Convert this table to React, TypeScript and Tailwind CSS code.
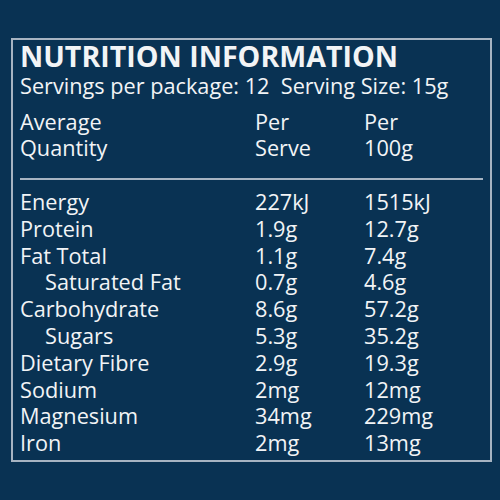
const rows: { name: string; serve: string; per100: string; sub?: boolean }[] = [
  { name: 'Energy', serve: '227kJ', per100: '1515kJ' },
  { name: 'Protein', serve: '1.9g', per100: '12.7g' },
  { name: 'Fat Total', serve: '1.1g', per100: '7.4g' },
  { name: 'Saturated Fat', serve: '0.7g', per100: '4.6g', sub: true },
  { name: 'Carbohydrate', serve: '8.6g', per100: '57.2g' },
  { name: 'Sugars', serve: '5.3g', per100: '35.2g', sub: true },
  { name: 'Dietary Fibre', serve: '2.9g', per100: '19.3g' },
  { name: 'Sodium', serve: '2mg', per100: '12mg' },
  { name: 'Magnesium', serve: '34mg', per100: '229mg' },
  { name: 'Iron', serve: '2mg', per100: '13mg' },
];

export default function App() {
  return (
    <div
      className="min-h-[500px] w-[500px] bg-[#093253] pt-[38px] pl-[11px] text-[#f2f4f6]"
      style={{ fontFamily: '"Open Sans", "Noto Sans", sans-serif' }}
    >
      <div className="w-[481px] h-[424px] border-2 border-[#a7b4c2] px-[7px]">
        <h1 className="text-[28.6px] leading-[32px] font-bold">NUTRITION INFORMATION</h1>
        <p className="text-[21.7px] leading-[28px] whitespace-pre">Servings per package: 12  Serving Size: 15g</p>

        <div className="grid grid-cols-[235px_109px_1fr] text-[21.7px] leading-[26px] mt-[9px]">
          <div>
            Average
            <br />
            Quantity
          </div>
          <div>
            Per
            <br />
            Serve
          </div>
          <div>
            Per
            <br />
            100g
          </div>
        </div>

        <div className="h-[2px] bg-[#a7b4c2] mt-[17px] mb-[9px]"></div>

        <div className="grid grid-cols-[235px_109px_1fr] text-[21.7px] leading-[26.8px]">
          {rows.map((r) => (
            <div key={r.name} className="contents">
              <div className={r.sub ? 'pl-[25px]' : ''}>{r.name}</div>
              <div>{r.serve}</div>
              <div>{r.per100}</div>
            </div>
          ))}
        </div>
      </div>
    </div>
  );
}
